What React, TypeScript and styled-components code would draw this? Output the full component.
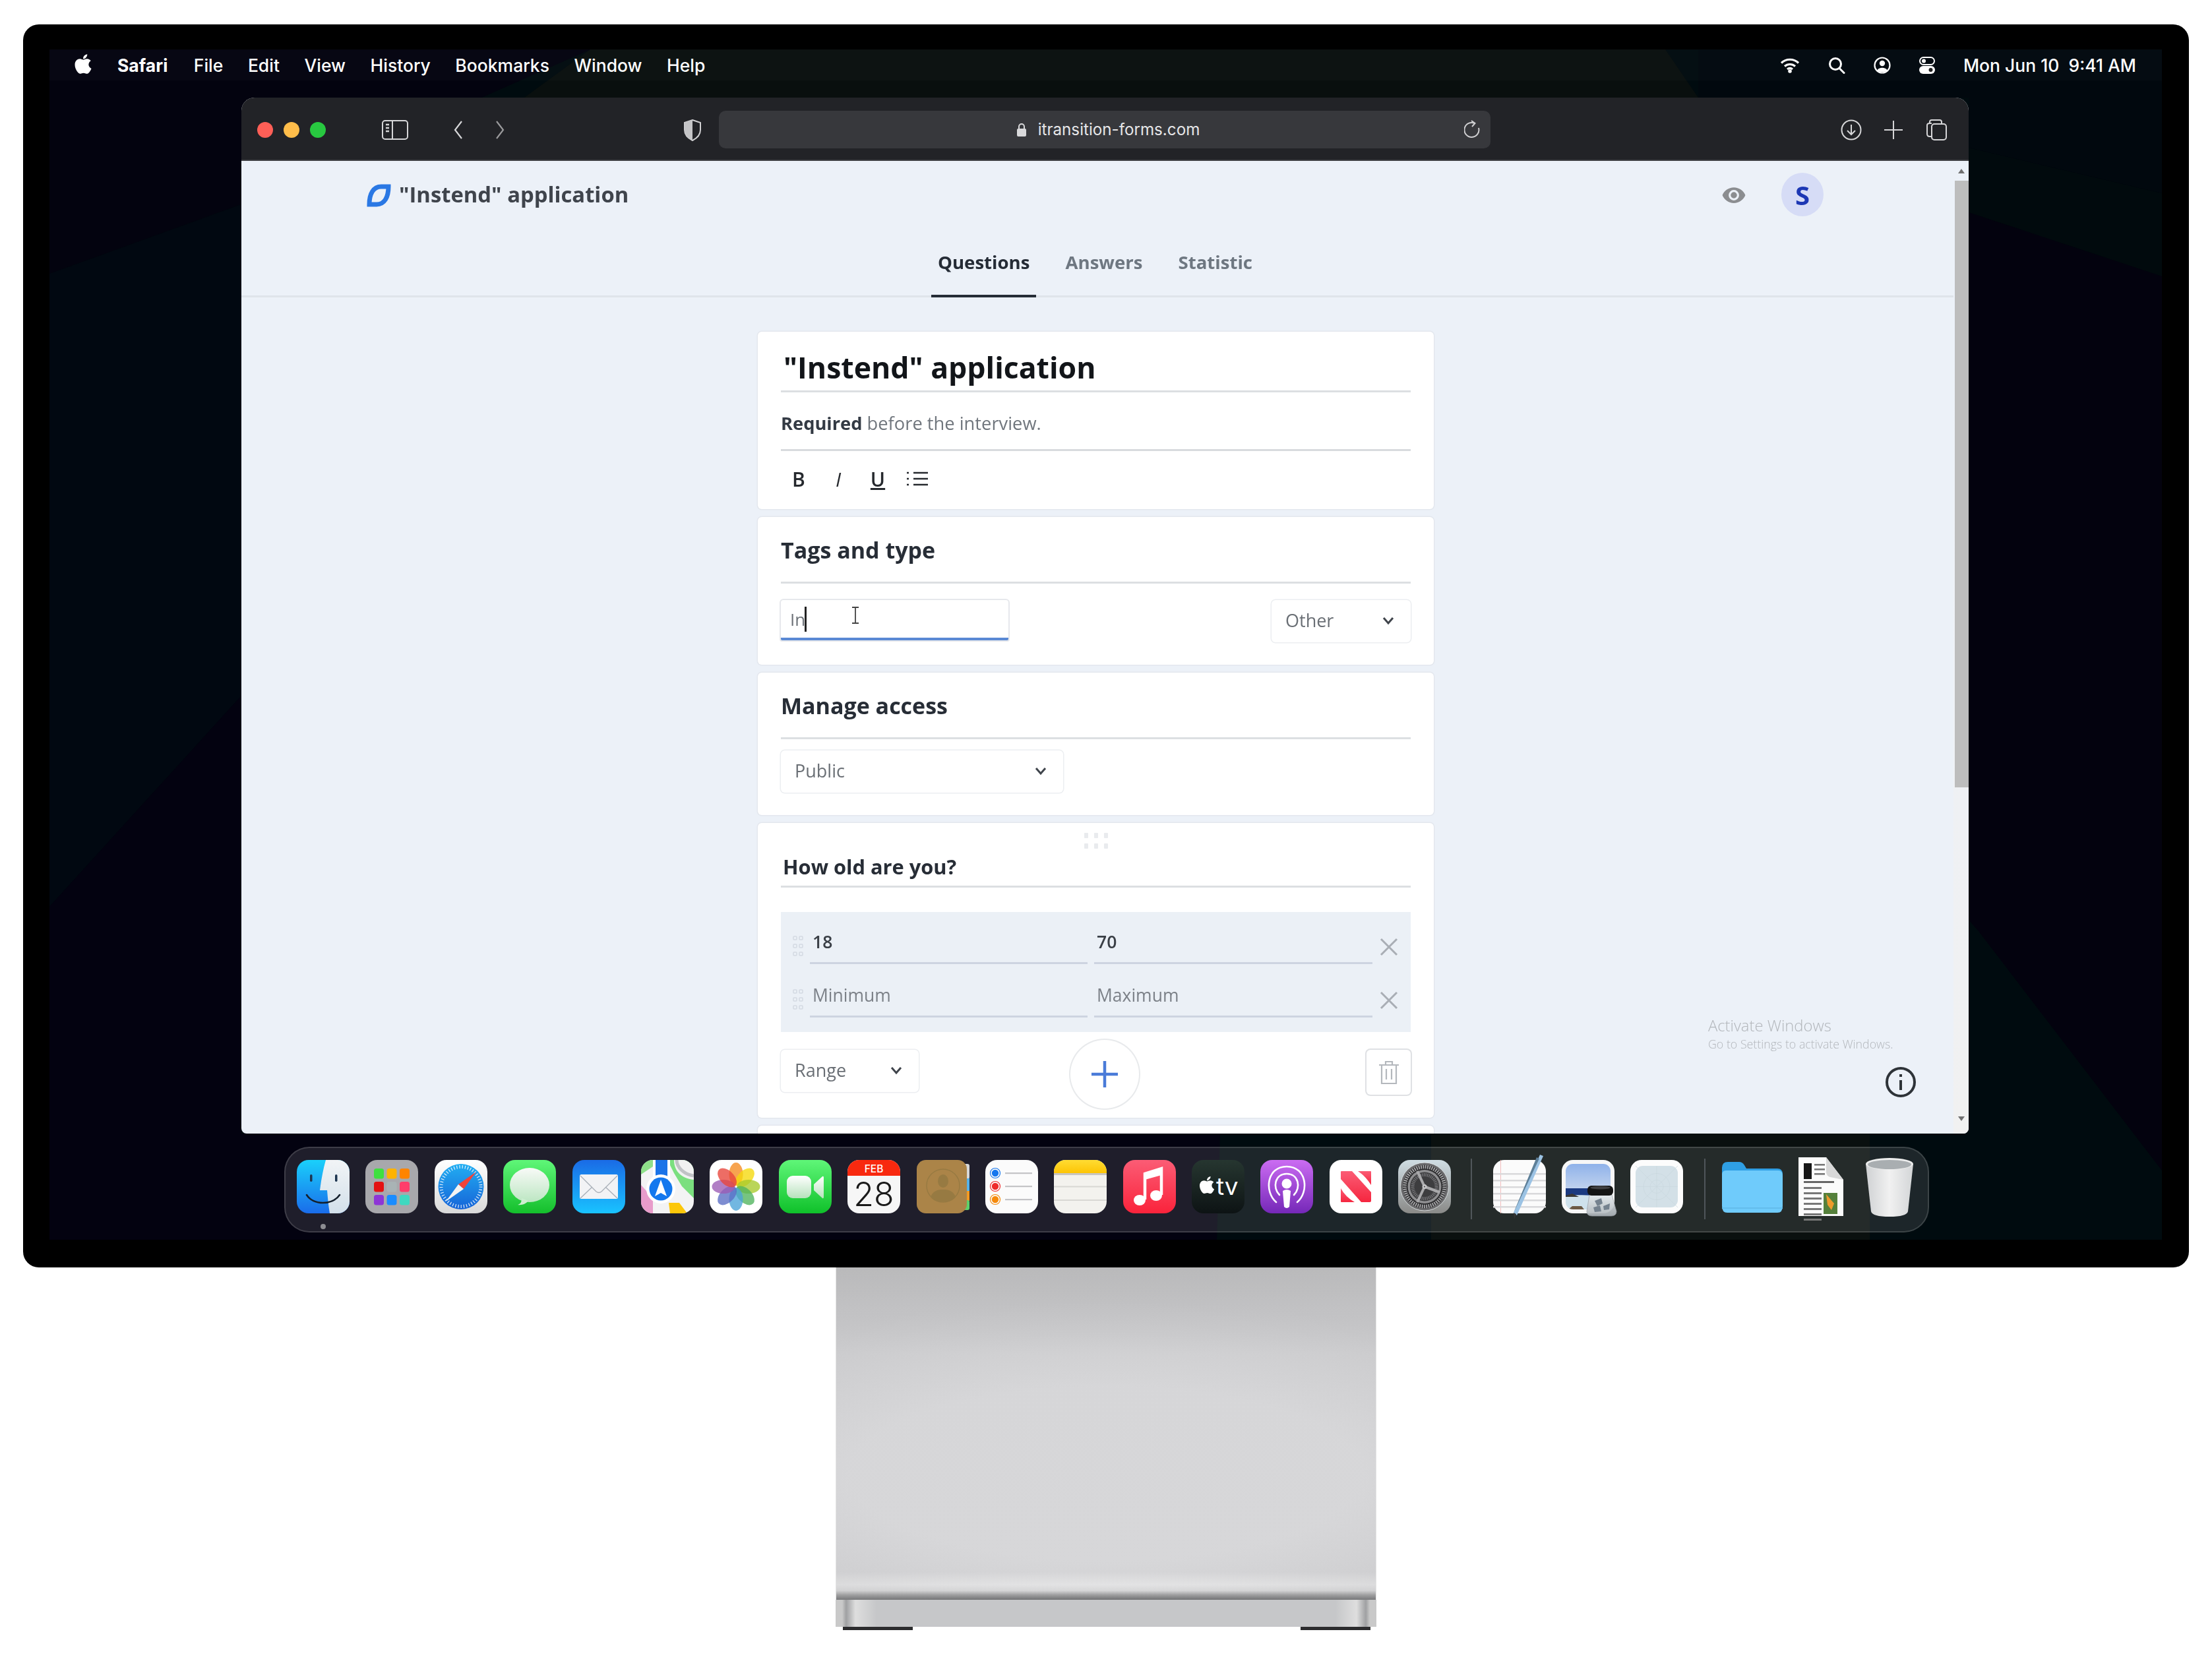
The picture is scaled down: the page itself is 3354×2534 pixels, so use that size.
import React from 'react';
import styled, { createGlobalStyle } from 'styled-components';
import { FaApple } from 'react-icons/fa';

const Global = createGlobalStyle`
  html, body { margin: 0; padding: 0; background: #fff; }
  #root { width: 3354px; height: 2534px; overflow: hidden; }
  * { box-sizing: border-box; }
`;

const Page = styled.div`
  width: 3354px;
  height: 2534px;
  background: #fff;
  padding-top: 37px;
  font-family: "Open Sans", "Noto Sans", sans-serif;
`;

const Monitor = styled.div`
  width: 3284px;
  height: 1885px;
  margin-left: 35px;
  padding: 38px 41px 42px 40px;
  background: #000;
  border-radius: 24px;
`;

const Screen = styled.div`
  position: relative;
  isolation: isolate;
  height: 100%;
  display: flex;
  flex-direction: column;
  overflow: hidden;
  background: #000b0f;
`;

const Wallpaper = styled.svg`
  position: absolute;
  inset: 0;
  width: 100%;
  height: 100%;
  z-index: -1;
`;

const MenuBar = styled.div`
  height: 47px;
  flex: none;
  display: flex;
  align-items: center;
  padding: 0 39px 0 38px;
  background: rgba(255, 255, 255, 0.018);
  color: #fff;
  font-family: Inter, "Liberation Sans", sans-serif;
  font-size: 26.5px;
  font-weight: 500;
`;

const AppleMark = styled(FaApple)`
  width: 32px;
  height: 34px;
  margin: -4px 36px 0 -3px;
  color: #fff;
`;

const MenuItems = styled.div`
  display: flex;
  gap: 37.5px;
`;

const MenuItem = styled.span<{ $strong?: boolean }>`
  font-weight: ${p => (p.$strong ? 700 : 500)};
  margin-right: ${p => (p.$strong ? 2 : 0)}px;
`;

const Status = styled.div`
  margin-left: auto;
  display: flex;
  align-items: center;
  gap: 43px;
`;

const Clock = styled.span`
  white-space: pre;
`;

const Window = styled.div`
  width: 2619px;
  height: 1571px;
  flex: none;
  margin: 26px 0 0 291px;
  display: flex;
  flex-direction: column;
  border-radius: 20px 20px 8px 8px;
  overflow: hidden;
  background: #ecf1f8;
`;

const Toolbar = styled.div`
  height: 96px;
  flex: none;
  display: flex;
  align-items: center;
  padding: 4px 0 0 24px;
  background: #222327;
  border-bottom: 2px solid #3d3e42;
`;

const Light = styled.span<{ $c: string }>`
  width: 24px;
  height: 24px;
  margin-right: 16px;
  border-radius: 50%;
  background: ${p => p.$c};
`;

const ToolIcon = styled.svg<{ $ml: number }>`
  flex: none;
  margin-left: ${p => p.$ml}px;
  color: #d6d6d8;
`;

const UrlBar = styled.div`
  width: 1170px;
  height: 57px;
  margin: -1px 0 0 26px;
  padding: 0 14px 0 24px;
  display: grid;
  grid-template-columns: 1fr auto 1fr;
  align-items: center;
  border-radius: 10px;
  background: #37383c;
  color: #e6e6e8;
  font-family: Inter, "Liberation Sans", sans-serif;
  font-size: 24.2px;
`;

const UrlText = styled.div`
  grid-column: 2;
  display: flex;
  align-items: center;
  gap: 17px;
`;

const Reload = styled.svg`
  grid-column: 3;
  justify-self: end;
`;

const Content = styled.div`
  position: relative;
  flex: 1;
  min-height: 0;
  display: grid;
  grid-template-columns: 1fr 23px;
  filter: blur(0.7px);
`;

const Main = styled.main`
  min-width: 0;
  overflow: hidden;
`;

const TopBar = styled.header`
  height: 104px;
  display: flex;
  align-items: center;
  padding: 0 197px 0 189px;
`;

const Logo = styled.svg`
  width: 38px;
  height: 35px;
  margin: 1px 12px 0 0;
`;

const AppName = styled.div`
  margin-top: -3px;
  font-size: 32.8px;
  font-weight: 700;
  color: #3f444c;
`;

const Eye = styled.svg`
  width: 38px;
  height: 38px;
  margin-left: auto;
`;

const Avatar = styled.div`
  width: 64px;
  height: 66px;
  margin: -2px 0 0 53px;
  display: flex;
  align-items: center;
  justify-content: center;
  border-radius: 50%;
  background: #d6dcf6;
  color: #1c37b4;
  font-size: 40px;
  font-weight: 700;
`;

const Tabs = styled.nav`
  height: 103px;
  display: flex;
  gap: 34px;
  padding-left: 1046px;
  border-bottom: 3px solid #dfe4ea;
`;

const Tab = styled.div<{ $on?: boolean }>`
  height: 103px;
  padding: 31px 10px 0;
  font-size: 27.6px;
  line-height: 36px;
  font-weight: 700;
  color: ${p => (p.$on ? '#252c36' : '#6e7781')};
  border-bottom: 4px solid ${p => (p.$on ? '#252c36' : 'transparent')};
`;

const Column = styled.div`
  width: 1025px;
  margin: 52px 0 0 783px;
  display: flex;
  flex-direction: column;
  gap: 12px;
`;

const Card = styled.section<{ $pb?: number }>`
  flex: none;
  padding: 0 35px ${p => p.$pb ?? 0}px;
  background: #fff;
  border-radius: 6px;
  box-shadow: 0 0 0 1.5px #e3e7ee;
`;

const BigTitle = styled.h1`
  margin: 0;
  padding: 32px 0 13px 4px;
  font-size: 44.6px;
  line-height: 44px;
  font-weight: 700;
  color: #121519;
  border-bottom: 3px solid #dcdfe2;
`;

const Description = styled.p`
  margin: 0;
  padding: 30px 0 22px;
  font-size: 27.3px;
  line-height: 34px;
  color: #70767d;
  border-bottom: 3px solid #d8dbde;
`;

const Strong = styled.b`
  font-weight: 700;
  color: #333a44;
`;

const FormatBar = styled.div`
  height: 88px;
  margin-left: -3px;
  padding-bottom: 4px;
  display: flex;
  align-items: center;
`;

const FormatButton = styled.div<{ $i?: boolean; $u?: boolean }>`
  width: 60px;
  text-align: center;
  font-size: 30px;
  font-weight: ${p => (p.$i ? 400 : 600)};
  font-style: ${p => (p.$i ? 'italic' : 'normal')};
  text-decoration: ${p => (p.$u ? 'underline' : 'none')};
  color: #26292e;
`;

const ListGlyph = styled.svg`
  width: 60px;
  height: 30px;
`;

const SectionTitle = styled.h2<{ $pb: number; $pl?: number }>`
  margin: 0;
  padding: ${p => (p.$pb === 9 ? 0 : 30)}px 0 ${p => p.$pb}px ${p => p.$pl ?? 0}px;
  font-size: ${p => (p.$pl ? 30.8 : 34)}px;
  line-height: 40px;
  font-weight: 700;
  color: #272d36;
  border-bottom: 3px solid #dcdfe2;
`;

const FieldRow = styled.div`
  display: flex;
  justify-content: space-between;
  align-items: flex-start;
  margin-top: 25px;
`;

const TagInput = styled.div`
  position: relative;
  width: 345px;
  height: 61px;
  padding: 0 0 0 14px;
  display: flex;
  align-items: center;
  font-size: 26px;
  color: #6d7278;
  background: #fff;
  border-radius: 4px 4px 2px 2px;
  box-shadow: 0 0 0 2px #e6e8ec;
  border-bottom: 4px solid #5a88d4;
`;

const Caret = styled.span`
  width: 3px;
  height: 38px;
  margin-left: -1px;
  background: #222;
`;

const IBeam = styled.svg`
  position: absolute;
  left: 106px;
  top: 10px;
  width: 14px;
  height: 26px;
`;

const Select = styled.div<{ $w: number; $mt?: number }>`
  width: ${p => p.$w}px;
  height: 64px;
  margin-top: ${p => p.$mt ?? 0}px;
  padding: 0 24px 3px 21px;
  display: flex;
  align-items: center;
  justify-content: space-between;
  font-size: 27px;
  color: #6a6f75;
  background: #fff;
  border-radius: 6px;
  box-shadow: 0 0 0 1.5px #eceef1;
`;

const Chevron = styled.svg`
  width: 20px;
  height: 14px;
`;

const Handle = styled.svg`
  display: block;
  width: 46px;
  height: 46px;
  margin: 0 auto;
`;

const Options = styled.div`
  margin-top: 37px;
  padding: 17px 0 22px;
  display: flex;
  flex-direction: column;
  gap: 19px;
  background: #ebf0f6;
`;

const OptionRow = styled.div`
  display: grid;
  grid-template-columns: 44px 421px 432px 58px;
  align-items: center;
`;

const Grip = styled.svg`
  width: 18px;
  height: 34px;
  margin: 8px 0 0 17px;
`;

const OptionField = styled.div<{ $ph?: boolean; $ml?: number }>`
  height: 62px;
  margin-left: ${p => p.$ml ?? 0}px;
  padding-left: 4px;
  font-size: 26.5px;
  line-height: 57px;
  font-weight: ${p => (p.$ph ? 400 : 600)};
  color: ${p => (p.$ph ? '#7c8188' : '#3a3f46')};
  border-bottom: 3px solid #cdd4e0;
`;

const Cross = styled.svg`
  width: 30px;
  height: 30px;
  margin: 9px 0 0 10px;
`;

const ActionRow = styled.div`
  height: 68px;
  margin-top: 27px;
  display: flex;
  align-items: flex-start;
`;

const AddButton = styled.div`
  width: 104px;
  height: 104px;
  margin: -15px 0 0 230px;
  display: flex;
  align-items: center;
  justify-content: center;
  background: #fff;
  border-radius: 50%;
  box-shadow: 0 0 0 2px #e8eaec;
`;

const TrashButton = styled.div`
  width: 67px;
  height: 68px;
  margin-left: auto;
  display: flex;
  align-items: center;
  justify-content: center;
  background: #fff;
  border-radius: 6px;
  box-shadow: 0 0 0 2px #dfe1e4;
`;

const Scrollbar = styled.div`
  display: flex;
  flex-direction: column;
  align-items: stretch;
  background: linear-gradient(180deg, #ecf1f8 0, #ecf1f8 20%, #f1f1f1 100%);
`;

const ScrollArrow = styled.div<{ $down?: boolean }>`
  height: ${p => (p.$down ? 26 : 30)}px;
  margin-top: ${p => (p.$down ? 'auto' : 0)};
  display: flex;
  align-items: ${p => (p.$down ? 'flex-start' : 'center')};
  justify-content: center;
  &::before {
    content: '';
    border-left: 5px solid transparent;
    border-right: 5px solid transparent;
    border-${p => (p.$down ? 'top' : 'bottom')}: 7px solid #707070;
  }
`;

const Thumb = styled.div`
  height: 920px;
  margin-left: 2px;
  background: #bdbdbd;
`;

const Watermark = styled.div`
  position: absolute;
  left: 2224px;
  top: 1296px;
  color: #b2b6bb;
  font-family: "Open Sans", sans-serif;
  font-weight: 300;
  white-space: nowrap;
`;

const WatermarkTitle = styled.div`
  font-size: 23.8px;
  line-height: 30px;
`;

const WatermarkSub = styled.div`
  font-size: 17.8px;
  line-height: 26px;
`;

const InfoIcon = styled.svg`
  position: absolute;
  left: 2492px;
  top: 1373px;
  width: 48px;
  height: 48px;
`;

const Dock = styled.div`
  width: 2494px;
  height: 130px;
  flex: none;
  margin: 20px 0 0 356px;
  padding: 18px 0 0 17px;
  display: flex;
  align-items: flex-start;
  background: rgba(255, 255, 255, 0.115);
  border: 2px solid rgba(255, 255, 255, 0.14);
  border-radius: 38px;
`;

const DockGroup = styled.div`
  display: flex;
  gap: 24.4px;
`;

const DockSlot = styled.div<{ $w?: number; $ml?: number }>`
  position: relative;
  width: ${p => p.$w ?? 80}px;
  height: 81px;
  margin-left: ${p => p.$ml ?? 0}px;
  flex: none;
  svg { overflow: visible; display: block; }
`;

const RunDot = styled.span`
  position: absolute;
  left: 36px;
  top: 97px;
  width: 8px;
  height: 8px;
  border-radius: 50%;
  background: #8d8d92;
`;

const DockDivider = styled.div<{ $ml: number; $mr: number }>`
  width: 2px;
  height: 92px;
  margin: -2px ${p => p.$mr}px 0 ${p => p.$ml}px;
  background: #50565a;
  flex: none;
`;

const Stand = styled.div`
  width: 820px;
  margin: 0 auto;
`;

const StandBody = styled.div`
  height: 504px;
  background:
    radial-gradient(95% 52% at 50% 62%, rgba(190,190,192,0) 50%, rgba(170,170,172,.3) 100%),
    linear-gradient(180deg, #c0c0c1 0, #cbcbcd 60px, #d6d6d8 130px, #d7d7d9 462px, #e8e8e9 481px, #dcdcdd 490px, #9a9a9b 497px, #68696b 504px);
  border-left: 1px solid #e4e4e4;
  border-right: 1px solid #e4e4e4;
`;

const StandBase = styled.div`
  height: 41px;
  background: linear-gradient(90deg, #c9c9c9 0, #c9c9c9 10px, #9fa0a2 16px, #dedede 30px, #c6c7c9 62px, #c6c7c9 758px, #dedede 790px, #9fa0a2 804px, #c9c9c9 810px, #c9c9c9 100%);
`;

const Feet = styled.div`
  display: flex;
  justify-content: space-between;
  padding: 0 9px 0 11px;
`;

const Foot = styled.div`
  width: 106px;
  height: 5px;
  background: #2c2c2e;
`;

/* ---------- dock icons ---------- */
const SvgIcon = ({ w = 80, h = 81, children }: { w?: number; h?: number; children: React.ReactNode }) => (
  <svg width={w} height={h} viewBox={`0 0 ${w} ${h}`}>{children}</svg>
);

const Grad = ({ id, a, b }: { id: string; a: string; b: string }) => (
  <linearGradient id={id} x1="0" y1="0" x2="0" y2="1">
    <stop offset="0" stopColor={a} />
    <stop offset="1" stopColor={b} />
  </linearGradient>
);

const Finder = () => (
  <SvgIcon>
    <defs>
      <Grad id="fb" a="#1ad0fb" b="#1a6cea" />
      <Grad id="fw" a="#f1f4f6" b="#d3e0ea" />
      <clipPath id="fc"><rect width="80" height="81" rx="18" /></clipPath>
    </defs>
    <g clipPath="url(#fc)">
      <rect width="80" height="81" fill="url(#fb)" />
      <path d="M44 0H80V81H50C48 70 47 58 46 46H35C37 30 40 14 44 0Z" fill="url(#fw)" />
    </g>
    <rect x="20" y="22" width="3.5" height="11" rx="1.7" fill="#1d3550" />
    <rect x="58" y="22" width="3.5" height="11" rx="1.7" fill="#1d3550" />
    <path d="M15 53C25 69 54 69 65 53" fill="none" stroke="#15202c" strokeWidth="2.6" strokeLinecap="round" />
  </SvgIcon>
);

const launchColors = ['#3fe03f', '#ffb300', '#ff8400', '#e41212', '#a9b3b5', '#ff3d6a', '#8e35d6', '#1a8cff', '#3fd8c0'];
const Launchpad = () => (
  <SvgIcon>
    <rect width="80" height="81" rx="18" fill="#a8a8ac" />
    {launchColors.map((c, i) => (
      <rect key={c} x={13 + (i % 3) * 19.5} y={13 + Math.floor(i / 3) * 20} width="15" height="15.5" rx="3.5" fill={c} />
    ))}
  </SvgIcon>
);

const Safari = () => (
  <SvgIcon>
    <defs>
      <Grad id="sw" a="#ffffff" b="#d9d9d9" />
      <Grad id="sb" a="#22aef2" b="#1664d8" />
    </defs>
    <rect width="80" height="81" rx="18" fill="url(#sw)" />
    <circle cx="40" cy="40.5" r="34.5" fill="url(#sb)" />
    <circle cx="40" cy="40.5" r="30" fill="none" stroke="#fff" strokeWidth="5" strokeDasharray="1.2 3" opacity=".85" />
    <path d="M36 37L63 18L44 44Z" fill="#f0433a" />
    <path d="M36 37L17 63L44 44Z" fill="#f3f3f3" />
  </SvgIcon>
);

const Messages = () => (
  <SvgIcon>
    <defs>
      <Grad id="mg" a="#5ff678" b="#14bf2c" />
      <Grad id="mb" a="#f8faf7" b="#bce6c2" />
    </defs>
    <rect width="80" height="81" rx="18" fill="url(#mg)" />
    <ellipse cx="40" cy="38" rx="30" ry="26" fill="url(#mb)" />
    <path d="M28 58C28 64 26 67 22 68C29 69 35 66 38 62Z" fill="#cdeed1" />
  </SvgIcon>
);

const Mail = () => (
  <SvgIcon>
    <defs><Grad id="ml" a="#1a6be6" b="#19c3ff" /></defs>
    <rect width="80" height="81" rx="18" fill="url(#ml)" />
    <rect x="11" y="22" width="58" height="37" rx="2.5" fill="#f2f3f5" />
    <path d="M12 24L36 48Q40 51 44 48L68 24M12 58L30 41M68 58L50 41" fill="none" stroke="#a9b0b8" strokeWidth="1.4" />
  </SvgIcon>
);

const Maps = () => (
  <SvgIcon>
    <defs><clipPath id="mc"><rect width="80" height="81" rx="18" /></clipPath></defs>
    <g clipPath="url(#mc)">
      <rect width="80" height="81" fill="#f3f3f4" />
      <path d="M0 0H24V6L0 22Z" fill="#8fe08a" />
      <path d="M40 0H80V58L62 40L50 20Z" fill="#7bdf7f" />
      <path d="M50 0C50 18 62 28 80 30V0Z" fill="#f1f1f1" />
      <path d="M54 0C54 12 66 22 80 24" fill="none" stroke="#c0c2c5" strokeWidth="5" />
      <rect x="22" y="0" width="18" height="40" fill="#1a73e8" />
      <rect x="18" y="0" width="4" height="40" fill="#fff" />
      <rect x="40" y="0" width="4" height="40" fill="#fff" />
      <path d="M0 38L18 58V81H0Z" fill="#e89ccb" />
      <path d="M42 65H58L70 81H44Z" fill="#fcc70a" />
      <circle cx="30" cy="44" r="22" fill="#fff" />
      <circle cx="30" cy="44" r="17.5" fill="#1478ee" />
      <path d="M30 30L39 55L30 50L21 55Z" fill="#fff" />
    </g>
  </SvgIcon>
);

const petals = ['#f58a1f', '#f5d90a', '#a6c92b', '#4fb35c', '#4aa3d9', '#5a6dc4', '#9b5bb5', '#e8443a'];
const Photos = () => (
  <SvgIcon>
    <rect width="80" height="81" rx="18" fill="#fff" />
    {petals.map((c, i) => (
      <ellipse key={c} cx="40" cy="21.5" rx="10.5" ry="17.5" fill={c} opacity=".78" transform={`rotate(${i * 45} 40 40.5)`} />
    ))}
  </SvgIcon>
);

const FaceTime = () => (
  <SvgIcon>
    <defs>
      <Grad id="ft" a="#5ff678" b="#0fc12a" />
      <Grad id="fv" a="#ffffff" b="#b7e2bc" />
    </defs>
    <rect width="80" height="81" rx="18" fill="url(#ft)" />
    <rect x="12" y="24" width="37" height="34" rx="9" fill="url(#fv)" />
    <path d="M53 37L66 25Q68 24 68 27V56Q68 59 66 58L53 46Z" fill="url(#fv)" />
  </SvgIcon>
);

const Calendar = () => (
  <SvgIcon>
    <defs><clipPath id="cc"><rect width="80" height="81" rx="18" /></clipPath></defs>
    <g clipPath="url(#cc)">
      <rect width="80" height="81" fill="#f6f6f6" />
      <rect width="80" height="24" fill="#f8290f" />
    </g>
    <text x="40" y="19" textAnchor="middle" fontFamily="Inter, sans-serif" fontSize="15.5" fontWeight="500" fill="#fff">FEB</text>
    <text x="40" y="70" textAnchor="middle" fontFamily="Inter, sans-serif" fontSize="50" fontWeight="300" fill="#191919">28</text>
  </SvgIcon>
);

const Contacts = () => (
  <SvgIcon>
    <rect x="70" y="6" width="10" height="23" rx="3" fill="#d8d8d8" />
    <rect x="70" y="28" width="10" height="20" fill="#55b2ea" />
    <rect x="70" y="47" width="10" height="15" fill="#f39a22" />
    <rect x="70" y="61" width="10" height="15" rx="3" fill="#5ed16a" />
    <rect width="76" height="81" rx="14" fill="#ab8448" />
    <circle cx="40" cy="39" r="25" fill="none" stroke="#977a42" strokeWidth="1.4" />
    <ellipse cx="40" cy="32" rx="8" ry="10" fill="#977a42" />
    <path d="M21 56C25 46 33 45 40 45S55 46 59 56C52 66 28 66 21 56Z" fill="#977a42" />
  </SvgIcon>
);

const Reminders = () => (
  <SvgIcon>
    <rect width="80" height="81" rx="18" fill="#fbfbfb" />
    {[['#1677ee', 20], ['#ee2b2b', 40], ['#f58a0c', 60]].map(([c, y]) => (
      <g key={c as string}>
        <circle cx="15" cy={y as number} r="7.5" fill="none" stroke={c as string} strokeWidth="1.2" />
        <circle cx="15" cy={y as number} r="5.2" fill={c as string} />
        <rect x="30" y={(y as number) - 1} width="41" height="2.2" fill="#c4c4c6" />
      </g>
    ))}
  </SvgIcon>
);

const Notes = () => (
  <SvgIcon>
    <defs>
      <Grad id="ny" a="#ffdc33" b="#fdc404" />
      <clipPath id="nc"><rect width="80" height="81" rx="18" /></clipPath>
    </defs>
    <g clipPath="url(#nc)">
      <rect width="80" height="81" fill="#f3f2ee" />
      <rect width="80" height="20" fill="url(#ny)" />
      <rect y="20" width="80" height="3" fill="#c7c5c0" />
      <rect y="39.5" width="80" height="2" fill="#d8d7d3" />
      <rect y="60" width="80" height="2" fill="#d8d7d3" />
    </g>
  </SvgIcon>
);

const Music = () => (
  <SvgIcon>
    <defs><Grad id="mu" a="#fb5c75" b="#fa233b" /></defs>
    <rect width="80" height="81" rx="18" fill="url(#mu)" />
    <path d="M33 60V21L58 13V53" fill="none" stroke="#fff" strokeWidth="4.5" />
    <path d="M33 22L58 14V23L33 30Z" fill="#fff" />
    <ellipse cx="25" cy="61" rx="9" ry="8" fill="#fff" />
    <ellipse cx="50" cy="54" rx="9" ry="8" fill="#fff" />
  </SvgIcon>
);

const AppleTv = () => (
  <SvgIcon>
    <defs><Grad id="tv" a="#263630" b="#0d1314" /></defs>
    <rect width="80" height="81" rx="18" fill="url(#tv)" />
    <FaApple x="8" y="23" size={30} color="#fff" />
    <text x="37" y="53" fontFamily="Inter, sans-serif" fontSize="37" fontWeight="400" fill="#fff">tv</text>
  </SvgIcon>
);

const Podcasts = () => (
  <SvgIcon>
    <defs><Grad id="pd" a="#cb6cf2" b="#7528b8" /></defs>
    <rect width="80" height="81" rx="18" fill="url(#pd)" />
    <g fill="none" stroke="#fff" strokeLinecap="round">
      <path d="M24 64C6 49 9 10 40 10S74 49 56 64" strokeWidth="2.6" />
      <path d="M29 53C18 42 22 21 40 21S62 42 51 53" strokeWidth="2.6" />
    </g>
    <circle cx="40" cy="36" r="7.5" fill="#fff" />
    <path d="M34 47Q40 43 46 47L44 71Q40 75 36 71Z" fill="#fff" />
  </SvgIcon>
);

const News = () => (
  <SvgIcon>
    <defs><Grad id="nw" a="#fb5c75" b="#f5263f" /></defs>
    <rect width="80" height="81" rx="18" fill="#fff" />
    <g fill="url(#nw)">
      <path d="M18 17H34L63 49V62Q63 64 61 64H48L17 29V18Q17 17 18 17Z" />
      <path d="M43 17H62Q63 17 63 18V38Q54 24 43 17Z" />
      <path d="M17 43Q24 56 38 64H18Q17 64 17 63Z" />
    </g>
  </SvgIcon>
);

const SystemPrefs = () => (
  <SvgIcon>
    <defs><Grad id="sp" a="#cfdde3" b="#8a8a88" /></defs>
    <rect width="80" height="81" rx="18" fill="url(#sp)" />
    <circle cx="40" cy="40.5" r="36.5" fill="#6a6a6c" stroke="#e8eef0" strokeWidth=".8" />
    <circle cx="40" cy="40.5" r="33" fill="#2b2b2d" />
    <circle cx="40" cy="40.5" r="30" fill="none" stroke="#a8a8aa" strokeWidth="5.500" strokeDasharray="1.800 1.500" />
    <circle cx="40" cy="40.5" r="25.500" fill="#8f8f91" />
    <circle cx="40" cy="40.5" r="22" fill="#3d3d3f" />
    <circle cx="40" cy="40.5" r="18" fill="none" stroke="#77777a" strokeWidth="5" strokeDasharray="1.300 1.300" />
    <g stroke="#a9a9ab" strokeWidth="4">
      <path d="M40 40.5L29 17M40 40.500L63 49M40 40.500L29 64" />
    </g>
    <circle cx="40" cy="40.5" r="3.500" fill="#c5c5c7" />
    <circle cx="40" cy="40.5" r="1" fill="#444" />
  </SvgIcon>
);

const TextEdit = () => (
  <SvgIcon>
    <rect width="80" height="81" rx="17" fill="#fbfbfb" />
    <rect x="11" y="0" width="1" height="81" fill="#f3bdbd" />
    {[20, 30, 40, 50, 60, 70].map(y => <rect key={y} y={y} width="80" height="2.5" fill="#d9d9db" />)}
    <path d="M71 -8L76 -6L36 84L31 80Z" fill="#9cc3e4" />
    <path d="M66 -4L70 -2L33 76L31 80Z" fill="#5d7f98" />
    <path d="M31 80L35 82L32 90Z" fill="#333" />
  </SvgIcon>
);

const Preview = () => (
  <SvgIcon>
    <defs>
      <Grad id="ps" a="#8fb2ea" b="#c3d4ee" />
      <Grad id="pg" a="#e6eaed" b="#aeb5ba" />
      <clipPath id="pc"><rect x="6" y="6" width="68" height="69" rx="11" /></clipPath>
    </defs>
    <rect width="80" height="81" rx="17" fill="#f7f7f7" />
    <g clipPath="url(#pc)">
      <rect x="6" y="6" width="68" height="40" fill="url(#ps)" />
      <rect x="6" y="43" width="68" height="12" fill="#1b3a80" />
      <path d="M6 56C20 50 40 56 74 53V75H6Z" fill="#cfe2ec" />
      <path d="M6 54L16 51L26 56H6Z" fill="#3a3835" />
      <path d="M10 75L16 70L30 70L34 75Z" fill="#6c5a45" />
    </g>
    <path d="M42 53H76L83 78Q83 85 75 85H46Q38 85 38 78Z" fill="url(#pg)" opacity=".92" stroke="#9a9fa4" strokeWidth=".8" />
    <path d="M50 62L60 58L62 66L54 70ZM48 72L58 69L60 78L50 79ZM63 70L73 66L72 75L64 76Z" fill="#75828f" />
    <rect x="39" y="39" width="39" height="15" rx="6" fill="#141414" />
    <ellipse cx="58.500" cy="42" rx="15" ry="2.500" fill="#3f3f41" />
  </SvgIcon>
);

const Blank = () => (
  <SvgIcon>
    <rect width="80" height="81" rx="17" fill="#fcfcfc" />
    <rect x="8" y="9" width="64" height="63" rx="11" fill="#d3e0e7" />
    <g fill="none" stroke="#c8d7de" strokeWidth=".7">
      <path d="M8 40.5H72M40 9V72M8 9L72 72M72 9L8 72" />
      <circle cx="40" cy="40.5" r="20" />
      <circle cx="40" cy="40.5" r="10" />
    </g>
  </SvgIcon>
);

const Folder = () => (
  <SvgIcon w={92} h={81}>
    <path d="M0 12Q0 3 9 3H26Q31 3 34 8L37 13H84Q92 13 92 22V40H0Z" fill="#2f9fe4" />
    <path d="M0 22Q0 16 7 16L85 16Q92 16 92 24V70Q92 80 84 80H8Q0 80 0 70Z" fill="#6fcbfb" />
    <rect x="0" y="72" width="92" height="2" fill="#64bdec" />
  </SvgIcon>
);

const docRows = [34, 42, 50, 58, 66, 74, 82];
const Doc = () => (
  <SvgIcon w={68} h={81}>
    <path d="M0 -4H42L68 30V85H0Z" fill="#fbfbfb" />
    <path d="M42 -4L68 30L48 26Q42 24 42 18Z" fill="#d8d8d8" />
    <rect x="8" y="5" width="12" height="24" fill="#161616" />
    {[6, 13, 20].map(y => <rect key={y} x="24" y={y} width="16" height="2.6" fill="#777" />)}
    <rect x="8" y="32" width="46" height="3" fill="#666" />
    {docRows.map(y => <rect key={y} x="8" y={y + 7} width="27" height="3" fill="#777" />)}
    <rect x="38" y="50" width="21" height="32" fill="#55803b" />
    <path d="M42 52L54 66L50 76L44 68Z" fill="#ef9a2c" />
  </SvgIcon>
);

const Trash = () => (
  <SvgIcon w={72} h={81}>
    <defs>
      <linearGradient id="tb" x1="0" y1="0" x2="1" y2="0">
        <stop offset="0" stopColor="#cfd1d3" />
        <stop offset=".5" stopColor="#f1f1f1" />
        <stop offset="1" stopColor="#d3d5d7" />
      </linearGradient>
    </defs>
    <path d="M0 6L8 78Q10 86 36 86T64 78L72 6Z" fill="url(#tb)" />
    <ellipse cx="36" cy="6" rx="36" ry="9" fill="#eceded" />
    <ellipse cx="36" cy="7" rx="33" ry="7" fill="#a9aeb1" />
  </SvgIcon>
);

const mainIcons = [Finder, Launchpad, Safari, Messages, Mail, Maps, Photos, FaceTime, Calendar, Contacts, Reminders, Notes, Music, AppleTv, Podcasts, News, SystemPrefs];

const menus = ['File', 'Edit', 'View', 'History', 'Bookmarks', 'Window', 'Help'];

export default function App() {
  return (
    <Page>
      <Global />
      <Monitor>
        <Screen>
          <Wallpaper viewBox="0 0 3203 1805" preserveAspectRatio="none">
            <rect width="3203" height="1805" fill="#000b0f" />
            <path d="M0 340L291 235V980L0 1300Z" fill="#010811" />
            <path d="M0 0H820L290 235L0 340Z" fill="#03030f" />
            <path d="M0 1300L291 980V1644H1775L1770 1805H0Z" fill="#030210" />
            <path d="M820 0H2450L2500 73H720Z" fill="#090f0e" />
            <rect x="2095" y="1644" width="665" height="161" fill="#0a100f" />
            <path d="M2910 0H3203V1700L2925 1337L2910 1320Z" fill="#03020e" />
            <path d="M2500 0H3203V218L2910 149V73H2500Z" fill="#01080e" />
            <path d="M2910 149L3203 218V344L2910 247Z" fill="#010a0d" />
          </Wallpaper>
          <MenuBar>
            <AppleMark />
            <MenuItems>
              <MenuItem $strong>Safari</MenuItem>
              {menus.map(m => <MenuItem key={m}>{m}</MenuItem>)}
            </MenuItems>
            <Status>
              <svg width="30" height="24" viewBox="0 0 30 24" fill="none" stroke="#fff" strokeWidth="3.2">
                <path d="M2 8.5C9 1.5 21 1.5 28 8.5M7 13.5C11.5 9.5 18.500 9.500 23 13.500M11 18C13.500 16 16.500 16 19 18" />
                <circle cx="15" cy="21" r="1.200" fill="#fff" />
              </svg>
              <svg width="26" height="26" viewBox="0 0 26 26" fill="none" stroke="#fff" strokeWidth="3">
                <circle cx="11" cy="11" r="8.500" />
                <path d="M17 17.500L24 24.500" strokeLinecap="round" />
              </svg>
              <svg width="26" height="26" viewBox="0 0 26 26">
                <circle cx="13" cy="13" r="11.500" fill="none" stroke="#fff" strokeWidth="2.200" />
                <circle cx="13" cy="10" r="4.200" fill="#fff" />
                <path d="M5.500 20.500C7.500 15.500 18.500 15.500 20.500 20.500C17 24.500 9 24.500 5.500 20.500Z" fill="#fff" />
              </svg>
              <svg width="24" height="26" viewBox="0 0 24 26">
                <rect x="1" y="1" width="22" height="11" rx="5.500" fill="none" stroke="#fff" strokeWidth="2" />
                <circle cx="7" cy="6.500" r="3" fill="#fff" />
                <rect y="14" width="24" height="12" rx="6" fill="#fff" />
                <circle cx="17.500" cy="20" r="3" fill="#222" />
              </svg>
              <Clock>Mon Jun 10  9:41 AM</Clock>
            </Status>
          </MenuBar>

          <Window>
            <Toolbar>
              <Light $c="#ff5f57" />
              <Light $c="#ffbd4a" />
              <Light $c="#28c840" />
              <ToolIcon $ml={69} width="40" height="30" viewBox="0 0 40 30" fill="none" stroke="currentColor" strokeWidth="2">
                <rect x="1" y="1" width="38" height="28" rx="4" />
                <path d="M16 1V29" />
                <path d="M6 7H11M6 12H11M6 17H11" strokeWidth="2.400" />
              </ToolIcon>
              <ToolIcon $ml={66} width="20" height="30" viewBox="0 0 20 30" fill="none" stroke="currentColor" strokeWidth="2.200">
                <path d="M15 2L5 15L15 28" />
              </ToolIcon>
              <ToolIcon $ml={43} width="20" height="30" viewBox="0 0 20 30" fill="none" stroke="#9a9a9c" strokeWidth="2.200">
                <path d="M5 2L15 15L5 28" />
              </ToolIcon>
              <ToolIcon $ml={268} width="28" height="33" viewBox="0 0 28 33">
                <path d="M14 1L26 5V16C26 24 20 29 14 32C8 29 2 24 2 16V5Z" fill="none" stroke="#d0d0d2" strokeWidth="2" />
                <path d="M14 1L2 5V16C2 24 8 29 14 32Z" fill="#c4c4c6" />
              </ToolIcon>
              <UrlBar>
                <UrlText>
                  <svg width="16" height="22" viewBox="0 0 16 22">
                    <rect x="1" y="9" width="14" height="12" rx="2" fill="#d9d9db" />
                    <path d="M4 10V6a4 4 0 018 0v4" fill="none" stroke="#d9d9db" strokeWidth="2" />
                  </svg>
                  itransition-forms.com
                </UrlText>
                <Reload width="26" height="30" viewBox="0 0 26 30" fill="none" stroke="#cfcfd1" strokeWidth="2">
                  <path d="M16 5A11 11 0 1022 12" />
                  <path d="M11 1L16.500 5L12 10" />
                </Reload>
              </UrlBar>
              <ToolIcon $ml={531} width="32" height="32" viewBox="0 0 32 32" fill="none" stroke="currentColor" strokeWidth="2">
                <circle cx="16" cy="16" r="14.500" />
                <path d="M16 8V23M10 17L16 23L22 17" />
              </ToolIcon>
              <ToolIcon $ml={32} width="32" height="32" viewBox="0 0 32 32" fill="none" stroke="currentColor" strokeWidth="2">
                <path d="M16 2V30M2 16H30" />
              </ToolIcon>
              <ToolIcon $ml={33} width="32" height="32" viewBox="0 0 32 32" fill="none" stroke="currentColor" strokeWidth="2">
                <path d="M6 7V4Q6 1 9 1H21Q24 1 24 4V6" />
                <rect x="9" y="7" width="22" height="24" rx="4" />
                <path d="M9 26H6Q2 26 2 22V9Q2 6 6 6H9" />
              </ToolIcon>
            </Toolbar>

            <Content>
              <Main>
                <TopBar>
                  <Logo viewBox="0 0 38 35">
                    <path d="M5 31C5 15 11 4 23 4H34C34 20 28 31 16 31Z" fill="none" stroke="#2a78e4" strokeWidth="7" />
                  </Logo>
                  <AppName>"Instend" application</AppName>
                  <Eye viewBox="0 0 24 24">
                    <path fill="#8b8d90" d="M12 4.500C7 4.500 2.700 7.600 1 12c1.700 4.400 6 7.500 11 7.500s9.300-3.100 11-7.500c-1.700-4.400-6-7.500-11-7.500zM12 17a5 5 0 110-10 5 5 0 010 10zm0-8a3 3 0 100 6 3 3 0 000-6z" />
                  </Eye>
                  <Avatar>S</Avatar>
                </TopBar>
                <Tabs>
                  <Tab $on>Questions</Tab>
                  <Tab>Answers</Tab>
                  <Tab>Statistic</Tab>
                </Tabs>
                <Column>
                  <Card>
                    <BigTitle>"Instend" application</BigTitle>
                    <Description><Strong>Required</Strong> before the interview.</Description>
                    <FormatBar>
                      <FormatButton>B</FormatButton>
                      <FormatButton $i>I</FormatButton>
                      <FormatButton $u>U</FormatButton>
                      <ListGlyph viewBox="0 0 60 30" stroke="#26292e" strokeWidth="2.600">
                        <path d="M24 6H46M24 15H46M24 24H46" />
                        <path d="M14 6H18M14 15H18M14 24H18" strokeDasharray="3 1" />
                      </ListGlyph>
                    </FormatBar>
                  </Card>

                  <Card $pb={34}>
                    <SectionTitle $pb={28}>Tags and type</SectionTitle>
                    <FieldRow>
                      <TagInput>
                        In<Caret />
                        <IBeam viewBox="0 0 14 26" fill="none" stroke="#444" strokeWidth="1.800">
                          <path d="M2 1H12M2 25H12M7 1V25" />
                        </IBeam>
                      </TagInput>
                      <Select $w={211}>Other<Chevron viewBox="0 0 20 14" fill="none" stroke="#3f444b" strokeWidth="3"><path d="M3 3L10 11L17 3" /></Chevron></Select>
                    </FieldRow>
                  </Card>

                  <Card $pb={34}>
                    <SectionTitle $pb={28}>Manage access</SectionTitle>
                    <Select $w={428} $mt={17}>Public<Chevron viewBox="0 0 20 14" fill="none" stroke="#3f444b" strokeWidth="3"><path d="M3 3L10 11L17 3" /></Chevron></Select>
                  </Card>

                  <Card $pb={35}>
                    <Handle viewBox="0 0 46 46" fill="#e9ebee">
                      {[8, 23, 38].flatMap(x => [19, 35].map(y => <rect key={`${x}-${y}`} x={x - 3} y={y - 4} width="6" height="8" rx="1" />))}
                    </Handle>
                    <SectionTitle $pb={9} $pl={3}>How old are you?</SectionTitle>
                    <Options>
                      {[['18', '70', false], ['Minimum', 'Maximum', true]].map(([a, b, ph]) => (
                        <OptionRow key={a as string}>
                          <Grip viewBox="0 0 18 34" fill="none" stroke="#d4d9e2" strokeWidth="1.500">
                            {[2, 14, 26].flatMap(y => [2, 11].map(x => <rect key={`${x}-${y}`} x={x} y={y} width="5" height="5" rx="1" />))}
                          </Grip>
                          <OptionField $ph={ph as boolean}>{a}</OptionField>
                          <OptionField $ph={ph as boolean} $ml={10}>{b}</OptionField>
                          <Cross viewBox="0 0 30 30" stroke="#a9aeb5" strokeWidth="3">
                            <path d="M3 3L27 27M27 3L3 27" />
                          </Cross>
                        </OptionRow>
                      ))}
                    </Options>
                    <ActionRow>
                      <Select $w={209}>Range<Chevron viewBox="0 0 20 14" fill="none" stroke="#3f444b" strokeWidth="3"><path d="M3 3L10 11L17 3" /></Chevron></Select>
                      <AddButton>
                        <svg width="42" height="42" viewBox="0 0 42 42" stroke="#4a7bd8" strokeWidth="4.500">
                          <path d="M21 1V41M1 21H41" />
                        </svg>
                      </AddButton>
                      <TrashButton>
                        <svg width="32" height="38" viewBox="0 0 32 38" fill="none" stroke="#b4b8bd" strokeWidth="2.200">
                          <path d="M1 8H31M11 8V3H21V8M5 8V36H27V8M12 14V30M20 14V30" />
                        </svg>
                      </TrashButton>
                    </ActionRow>
                  </Card>

                  <Card $pb={60} />
                </Column>
              </Main>
              <Scrollbar>
                <ScrollArrow />
                <Thumb />
                <ScrollArrow $down />
              </Scrollbar>
              <Watermark>
                <WatermarkTitle>Activate Windows</WatermarkTitle>
                <WatermarkSub>Go to Settings to activate Windows.</WatermarkSub>
              </Watermark>
              <InfoIcon viewBox="0 0 48 48" fill="none" stroke="#2e3338" strokeWidth="4">
                <circle cx="24" cy="24" r="21" />
                <path d="M24 21V36M24 12V16" />
              </InfoIcon>
            </Content>
          </Window>

          <Dock>
            <DockGroup>
              {mainIcons.map((Icon, i) => (
                <DockSlot key={i}>
                  <Icon />
                  {i === 0 && <RunDot />}
                </DockSlot>
              ))}
            </DockGroup>
            <DockDivider $ml={30} $mr={32} />
            <DockSlot><TextEdit /></DockSlot>
            <DockSlot $ml={24}><Preview /></DockSlot>
            <DockSlot $ml={24}><Blank /></DockSlot>
            <DockDivider $ml={32} $mr={25} />
            <DockSlot $w={92}><Folder /></DockSlot>
            <DockSlot $w={68} $ml={24}><Doc /></DockSlot>
            <DockSlot $w={72} $ml={34}><Trash /></DockSlot>
          </Dock>
        </Screen>
      </Monitor>
      <Stand>
        <StandBody />
        <StandBase />
        <Feet><Foot /><Foot /></Feet>
      </Stand>
    </Page>
  );
}
